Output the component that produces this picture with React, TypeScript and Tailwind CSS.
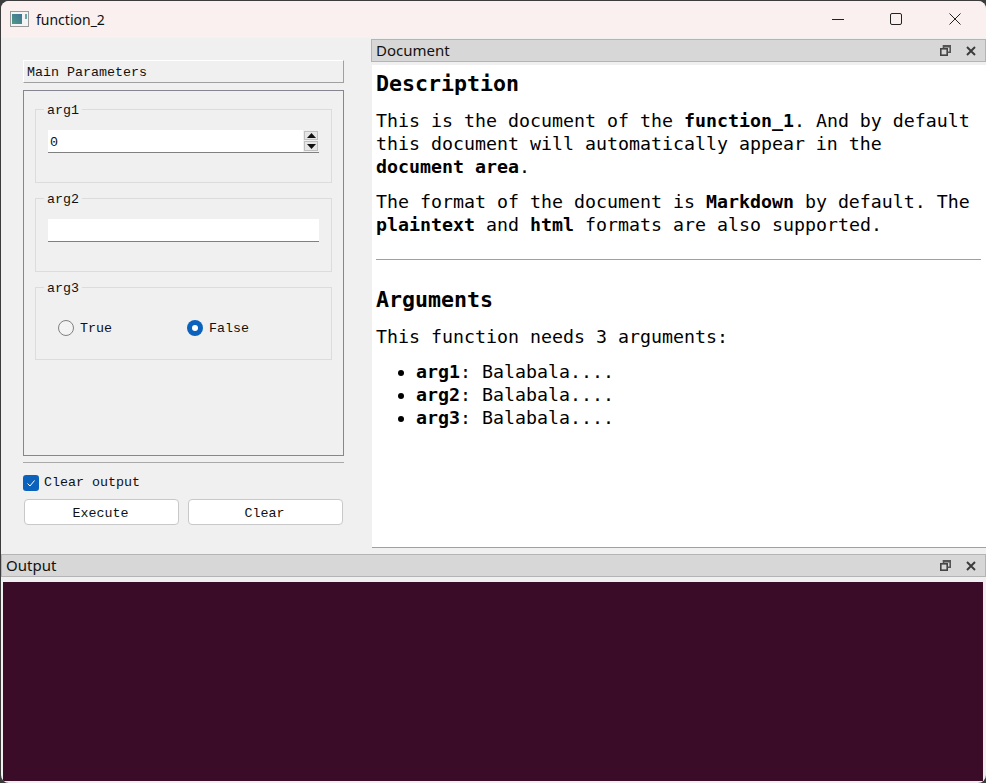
import React from "react";

const sim = "font-['Liberation_Mono',monospace] text-[13.33px] text-[#111]";
const doc = "font-['DejaVu_Sans_Mono',monospace] text-[18.27px] leading-[23px] text-black";

function DockIcons() {
  return (
    <div className="flex items-center gap-[15px] pr-[9px]">
      <svg width="11" height="11" viewBox="0 0 11 11" fill="none" stroke="#444" strokeWidth="1.6">
        <rect x="0.8" y="3.8" width="6.4" height="6.4" />
        <path d="M3.5 3.5V0.9H10.2V7.2H7.5" stroke="#555" />
        <path d="M3.5 1.5H10" strokeWidth="2" stroke="#555" />
      </svg>
      <svg width="10" height="10" viewBox="0 0 10 10" fill="none" stroke="#3a3a3a" strokeWidth="1.9">
        <path d="M1 1L9 9M9 1L1 9" />
      </svg>
    </div>
  );
}

function DockTitle({ title, className }: { title: string; className?: string }) {
  return (
    <div className={`flex h-[23px] items-center justify-between border border-[#b4b4b4] bg-[#d7d7d7] pl-[4px] ${className ?? ""}`}>
      <span className="font-['Noto_Sans',sans-serif] text-[15px] text-[#111]">{title}</span>
      <DockIcons />
    </div>
  );
}

function Group({ label, className, children }: { label: string; className: string; children: React.ReactNode }) {
  return (
    <div className={`relative border border-[#dcdcdc] ${className}`}>
      <span className={`absolute left-[8px] top-[-7px] bg-[#f0f0f0] px-[3px] leading-[15px] ${sim}`}>{label}</span>
      {children}
    </div>
  );
}

export default function App() {
  return (
    <div className="h-[783px] w-[986px] overflow-hidden bg-[#3c3c3c] pl-[1px] pt-[1px]">
      <div className="flex h-[782px] flex-col overflow-hidden rounded-[8px] bg-[#f0f0f0]">
        {/* title bar */}
        <div className="flex h-[37px] shrink-0 items-center bg-[#f9f0ef] pb-[1px]">
          <svg className="ml-[9px]" width="19" height="16" viewBox="0 0 19 16">
            <rect x="0.5" y="0.5" width="18" height="15" fill="#f4f4f4" stroke="#9a9a9a" />
            <defs>
              <linearGradient id="g" x1="0" y1="1" x2="1" y2="0">
                <stop offset="0" stopColor="#4f9a86" />
                <stop offset="1" stopColor="#3f7397" />
              </linearGradient>
            </defs>
            <rect x="2" y="3" width="10" height="10" fill="url(#g)" />
            <rect x="15" y="3" width="2" height="5" fill="#6aa6a8" />
          </svg>
          <span className="ml-[7px] font-['Noto_Sans',sans-serif] text-[14px] text-[#111]">function_2</span>
          <div className="ml-auto flex items-center">
            <svg width="14" height="14" viewBox="0 0 14 14" fill="none" stroke="#222" className="mr-[44px]">
              <path d="M1 7.5H13" />
            </svg>
            <svg width="14" height="14" viewBox="0 0 14 14" fill="none" stroke="#222" className="mr-[45px]">
              <rect x="1.5" y="1.5" width="11" height="11" rx="1.5" />
            </svg>
            <svg width="14" height="14" viewBox="0 0 14 14" fill="none" stroke="#222" className="mr-[24px]">
              <path d="M1.5 1.5L12.5 12.5M12.5 1.5L1.5 12.5" />
            </svg>
          </div>
        </div>

        {/* top area */}
        <div className="flex h-[516px] shrink-0">
          {/* left panel */}
          <div className="w-[371px] shrink-0 pl-[22px] pr-[28px] pt-[22px]">
            <div className={`flex h-[23px] items-center border border-b-[#a0a0a0] border-l-white border-r-[#a0a0a0] border-t-white pl-[3px] pt-[2px] ${sim}`}>
              Main Parameters
            </div>
            <div className="mt-[7px] flex h-[366px] flex-col gap-[15px] border border-[#868690] px-[11px] pt-[18px]">
              <Group label="arg1" className="h-[74px]">
                <div className="ml-[12px] mt-[20px] flex h-[23px] w-[271px] border-b border-[#808080] bg-white">
                  <span className={`pl-[2px] leading-[26px] ${sim}`}>0</span>
                  <div className="ml-auto flex w-[16px] flex-col gap-[1px] bg-[#f0f0f0] px-[1px] pt-[1px]">
                    <div className="flex h-[9px] items-center justify-center border border-[#c0c0c0] bg-[#e6e6e6]">
                      <svg width="9" height="5" viewBox="0 0 9 5"><path d="M4.5 0L9 5H0Z" fill="#111" /></svg>
                    </div>
                    <div className="flex h-[10px] items-center justify-center border border-[#c0c0c0] bg-[#e6e6e6]">
                      <svg width="9" height="5" viewBox="0 0 9 5"><path d="M0 0H9L4.5 5Z" fill="#111" /></svg>
                    </div>
                  </div>
                </div>
              </Group>
              <Group label="arg2" className="h-[74px]">
                <div className="ml-[12px] mt-[20px] h-[23px] w-[271px] border-b border-[#808080] bg-white" />
              </Group>
              <Group label="arg3" className="h-[73px]">
                <div className="flex h-full items-center pl-[22px] pt-[9px]">
                  <div className="flex w-[129px] items-center gap-[6px]">
                    <span className="h-[16px] w-[16px] rounded-full border border-[#808080] bg-[#f3f3f3]" />
                    <span className={`pt-[2px] ${sim}`}>True</span>
                  </div>
                  <div className="flex items-center gap-[6px]">
                    <span className="flex h-[16px] w-[16px] items-center justify-center rounded-full bg-[#0a62bd]">
                      <span className="h-[6px] w-[6px] rounded-full bg-white" />
                    </span>
                    <span className={`pt-[2px] ${sim}`}>False</span>
                  </div>
                </div>
              </Group>
            </div>
            <div className="mt-[6px] h-px bg-[#a9a9a9]" />
            <div className="mt-[10px] flex items-center gap-[5px]">
              <span className="flex h-[16px] w-[16px] items-center justify-center rounded-[3px] bg-[#0a62bd]">
                <svg width="10" height="10" viewBox="0 0 10 10" fill="none" stroke="#fff" strokeWidth="1">
                  <path d="M1.5 5.5L4 8L8.5 2.5" />
                </svg>
              </span>
              <span className={sim}>Clear output</span>
            </div>
            <div className="ml-[1px] mt-[6px] flex gap-[9px]">
              <button className={`h-[26px] w-[155px] rounded-[4px] border border-[#c8c8c8] bg-white pr-[2px] pt-[4px] ${sim}`}>Execute</button>
              <button className={`h-[26px] w-[155px] rounded-[4px] border border-[#c8c8c8] bg-white pr-[2px] pt-[4px] ${sim}`}>Clear</button>
            </div>
          </div>

          {/* document dock */}
          <div className="flex min-w-0 flex-1 flex-col pt-[1px]">
            <DockTitle title="Document" className="ml-[-1px]" />
            <div className="mt-[3px] h-[483px] border-b border-[#a0a0a0] bg-white pl-[4px] pr-[5px] pt-[6px]">
              <h2 className="font-['DejaVu_Sans_Mono',monospace] text-[21.6px] font-bold leading-[26px] text-black">Description</h2>
              <p className={`mt-[12px] ${doc}`}>
                This is the document of the <b>function_1</b>. And by default
                <br />
                this document will automatically appear in the
                <br />
                <b>document area</b>.
              </p>
              <p className={`mt-[12px] ${doc}`}>
                The format of the document is <b>Markdown</b> by default. The
                <br />
                <b>plaintext</b> and <b>html</b> formats are also supported.
              </p>
              <div className="mt-[23px] h-px bg-[#a0a0a0]" />
              <h2 className="mt-[27px] font-['DejaVu_Sans_Mono',monospace] text-[21.6px] font-bold leading-[26px] text-black">Arguments</h2>
              <p className={`mt-[12px] ${doc}`}>This function needs 3 arguments:</p>
              <ul className={`mt-[12px] list-disc pl-[40px] ${doc}`}>
                <li><b>arg1</b>: Balabala....</li>
                <li><b>arg2</b>: Balabala....</li>
                <li><b>arg3</b>: Balabala....</li>
              </ul>
            </div>
          </div>
        </div>

        {/* output dock */}
        <div className="flex min-h-0 flex-1 flex-col">
          <DockTitle title="Output" />
          <div className="ml-[2px] mr-[3px] mt-[5px] h-[199px] bg-[#3a0c28]" />
        </div>
      </div>
    </div>
  );
}
